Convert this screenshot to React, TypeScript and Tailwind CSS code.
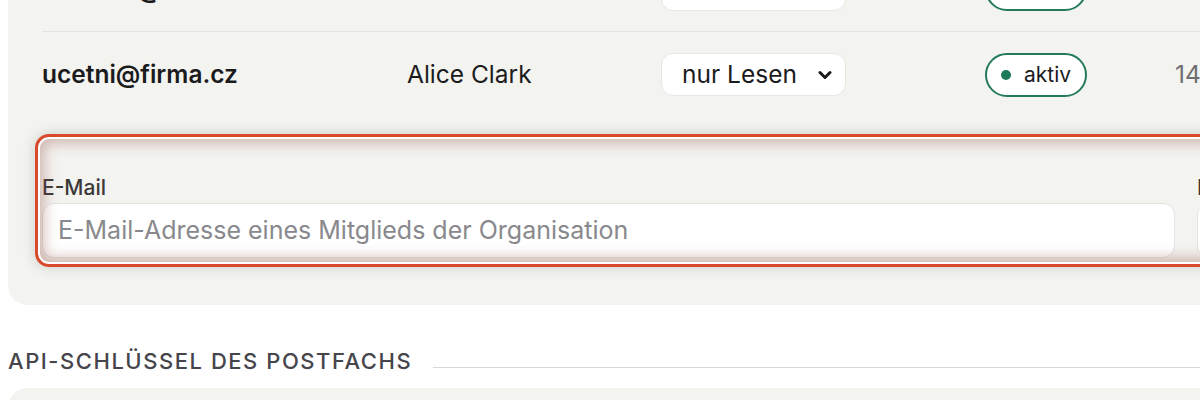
import React from "react";

function Row({
  email,
  name,
  role,
  date,
  border,
}: {
  email: string;
  name: string;
  role: string;
  date: string;
  border?: boolean;
}) {
  return (
    <div
      className={
        "grid h-[85px] grid-cols-[365px_254px_324px_190px_1fr] items-center " +
        (border ? "border-b border-[#e4e4e1]" : "")
      }
    >
      <div className="text-[24.5px] font-semibold text-[#1b1b1d]">{email}</div>
      <div className="text-[24.5px] text-[#1b1b1d]">{name}</div>
      <div>
        <div className="flex h-[43px] w-[185px] items-center justify-between rounded-[12px] border border-[#e6e6e3] bg-white pl-[20px] pr-[13px] text-[24.5px] text-[#1b1b1d]">
          <span>{role}</span>
          <svg width="14" height="10" viewBox="0 0 14 10" fill="none">
            <path d="M2 2.5 L7 7.5 L12 2.5" stroke="#1b1b1d" strokeWidth="3" strokeLinecap="round" strokeLinejoin="round" />
          </svg>
        </div>
      </div>
      <div>
        <div className="inline-flex h-[44px] items-center gap-[13px] rounded-full border-2 border-[#237a5b] bg-white pl-[14px] pr-[14px] text-[21px] text-[#1b1b1d]">
          <span className="h-[10px] w-[10px] rounded-full bg-[#1d7a57]" />
          <span>aktiv</span>
        </div>
      </div>
      <div className="whitespace-nowrap text-[24.5px] text-[#6e6e70]">{date}</div>
    </div>
  );
}

export default function App() {
  return (
    <div
      className="h-[400px] w-[1200px] overflow-hidden bg-white"
      style={{ fontFamily: "Inter, 'Noto Sans', sans-serif" }}
    >
      <div className="ml-[8px] mt-[-53px] w-[1500px] rounded-[20px] bg-[#f3f3f0] px-[34px] pb-[44px]">
        <Row email="redakce@firma.cz" name="Bob Miller" role="Admin" date="12.02.2024" border />
        <Row email="ucetni@firma.cz" name="Alice Clark" role="nur Lesen" date="14.03.2024" />
        <div className="relative mt-[22px]">
          <div className="grid grid-cols-[1133px_300px] gap-x-[22px] pb-[3px] pt-[36px]">
            <div className="flex flex-col gap-[3px]">
              <label className="text-[21px] font-medium leading-[25px] text-[#3b3838]">E-Mail</label>
              <div className="flex h-[55px] items-center rounded-[12px] border border-[#e3e3e0] bg-white px-[15px] text-[25px] text-[#89898d]">
                E-Mail-Adresse eines Mitglieds der Organisation
              </div>
            </div>
            <div className="flex flex-col gap-[3px]">
              <label className="text-[21px] font-medium leading-[25px] text-[#3b3838]">Rolle</label>
              <div className="flex h-[55px] items-center rounded-[12px] border border-[#e3e3e0] bg-white px-[15px] text-[25px] text-[#1b1b1d]">
                nur Lesen
              </div>
            </div>
          </div>
          <div className="pointer-events-none absolute -left-[7px] -top-[5px] -bottom-[6px] right-[-200px] rounded-[14px] border-[3px] border-[#d94a2c] shadow-[inset_0_0_0_2px_#ffffff,inset_0_0_14px_6px_rgba(150,85,75,0.4),0_0_12px_2px_rgba(0,0,0,0.12)]" />
        </div>
      </div>
      <div className="mt-[40px] flex items-center gap-[21px] pl-[8px]">
        <h2 className="whitespace-nowrap text-[22px] font-medium uppercase tracking-[0.07em] text-[#45454b]">
          API-Schlüssel des Postfachs
        </h2>
        <div className="mt-[12px] h-px flex-1 bg-[#d9d9d6]" />
      </div>
      <div className="ml-[8px] mt-[10px] h-[80px] w-[1500px] rounded-[20px] bg-[#f3f3f0]" />
    </div>
  );
}
